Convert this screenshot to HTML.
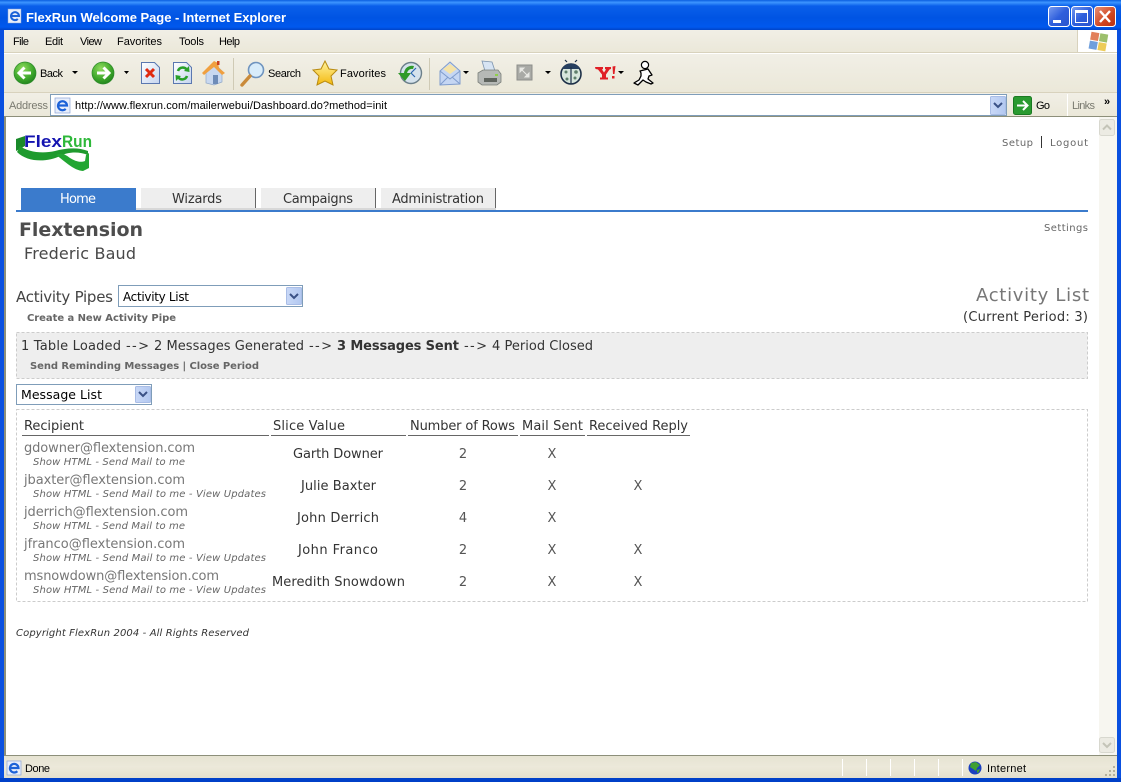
<!DOCTYPE html>
<html><head><meta charset="utf-8"><title>FlexRun Welcome Page - Internet Explorer</title>
<style>
html,body{margin:0;padding:0;background:#fff;width:1121px;height:782px;overflow:hidden}
svg{display:block}
text{white-space:pre}
.ui{font-family:"Liberation Sans",sans-serif;font-size:11px;fill:#000}
.v{font-family:"DejaVu Sans",sans-serif;font-size:13px;fill:#333}
.e{font-family:"DejaVu Sans",sans-serif;font-size:13px;fill:#777}
.s{font-family:"DejaVu Sans",sans-serif;font-size:10px;font-style:italic;fill:#666}
.h{font-family:"DejaVu Sans",sans-serif;font-size:13px;fill:#333}
.b{font-family:"DejaVu Sans",sans-serif;font-size:10px;font-weight:bold;fill:#666}
.x{font-family:"DejaVu Sans",sans-serif;font-size:13px;fill:#555;text-anchor:middle}
</style></head><body>
<svg xmlns="http://www.w3.org/2000/svg" width="1121" height="782" viewBox="0 0 1121 782">
<defs>
<linearGradient id="tb" x1="0" y1="0" x2="0" y2="1"><stop offset="0" stop-color="#0a5fe0"/><stop offset=".08" stop-color="#3d95ff"/><stop offset=".2" stop-color="#0a5fea"/><stop offset=".6" stop-color="#0054e3"/><stop offset=".9" stop-color="#0058ee"/><stop offset="1" stop-color="#0043c8"/></linearGradient>
<linearGradient id="bar" x1="0" y1="0" x2="0" y2="1"><stop offset="0" stop-color="#f1efe6"/><stop offset="1" stop-color="#ebe8d9"/></linearGradient>
<linearGradient id="st" x1="0" y1="0" x2="0" y2="1"><stop offset="0" stop-color="#e6e3d2"/><stop offset=".5" stop-color="#ece9da"/><stop offset="1" stop-color="#e3dfcd"/></linearGradient>
<radialGradient id="gr" cx=".4" cy=".3" r=".8"><stop offset="0" stop-color="#8fdc5e"/><stop offset=".6" stop-color="#3da62a"/><stop offset="1" stop-color="#1a7a1a"/></radialGradient>
<linearGradient id="btn" x1="0" y1="0" x2="1" y2="1"><stop offset="0" stop-color="#7a9df0"/><stop offset=".5" stop-color="#2f5fdc"/><stop offset="1" stop-color="#2a55cc"/></linearGradient>
<linearGradient id="cl" x1="0" y1="0" x2="1" y2="1"><stop offset="0" stop-color="#e8937a"/><stop offset=".6" stop-color="#d0451f"/><stop offset="1" stop-color="#b8300f"/></linearGradient>
<linearGradient id="sb" x1="0" y1="0" x2="1" y2="0"><stop offset="0" stop-color="#c9d8f7"/><stop offset="1" stop-color="#b2c8f0"/></linearGradient>
<linearGradient id="doc" x1="0" y1="0" x2="1" y2="1"><stop offset="0" stop-color="#fff"/><stop offset="1" stop-color="#c4d4ef"/></linearGradient>
<linearGradient id="star" x1="0" y1="0" x2="0" y2="1"><stop offset="0" stop-color="#fff3a0"/><stop offset="1" stop-color="#f4b90e"/></linearGradient>
</defs>

<!-- window frame -->
<rect width="1121" height="782" fill="#0a50e0"/>
<rect x="0" y="0" width="1121" height="30" fill="url(#tb)"/>
<rect x="0" y="778" width="1121" height="4" fill="#0040c8"/>
<rect x="4" y="30" width="1113" height="748" fill="#ece9d8"/>

<!-- title bar -->
<rect x="8" y="9" width="13" height="14" fill="#e8eefb" stroke="#8aa4d8" stroke-width=".5"/>
<path d="M11 16h8a4 4 0 1 0-1.200 3" fill="none" stroke="#1c62d8" stroke-width="2"/>
<text x="26" y="22" font-family="Liberation Sans,sans-serif" font-size="13" font-weight="bold" fill="#fff" textLength="260">FlexRun Welcome Page - Internet Explorer</text>
<rect x="1048.500" y="6.500" width="21" height="20" rx="3" fill="url(#btn)" stroke="#fff"/>
<rect x="1053" y="20" width="8" height="3" fill="#fff"/>
<rect x="1071.500" y="6.500" width="21" height="20" rx="3" fill="url(#btn)" stroke="#fff"/>
<rect x="1075.500" y="10.500" width="12" height="12" fill="none" stroke="#fff"/><rect x="1075" y="10" width="13" height="3" fill="#fff"/>
<rect x="1094.500" y="6.500" width="21" height="20" rx="3" fill="url(#cl)" stroke="#fff"/>
<path d="M1100 11l10 11M1110 11l-10 11" stroke="#fff" stroke-width="2.400"/>

<!-- menu bar -->
<rect x="4" y="30" width="1113" height="22" fill="url(#bar)"/>
<rect x="4" y="52" width="1113" height="1" fill="#d8d2bd"/>
<rect x="4" y="53" width="1113" height="1" fill="#fff"/>
<text class="ui" x="13" y="45" textLength="16">File</text>
<text class="ui" x="45" y="45" textLength="18">Edit</text>
<text class="ui" x="80" y="45" textLength="22">View</text>
<text class="ui" x="117" y="45" textLength="45">Favorites</text>
<text class="ui" x="179" y="45" textLength="25">Tools</text>
<text class="ui" x="219" y="45" textLength="21">Help</text>
<rect x="1077" y="30" width="40" height="22" fill="#fff"/><rect x="1077" y="30" width="1" height="22" fill="#d8d2bd"/>
<g transform="rotate(10 1098 41)"><rect x="1090" y="33" width="8" height="8" fill="#e2805a"/><rect x="1099" y="33" width="8" height="8" fill="#9cbf6c"/><rect x="1090" y="42" width="8" height="8" fill="#6f9fdc"/><rect x="1099" y="42" width="8" height="8" fill="#edcc5a"/></g>

<!-- toolbar -->
<rect x="4" y="54" width="1113" height="38" fill="url(#bar)"/>
<rect x="4" y="92" width="1113" height="1" fill="#d8d2bd"/>
<rect x="233" y="58" width="1" height="32" fill="#cfcab5"/>
<rect x="429" y="58" width="1" height="32" fill="#cfcab5"/>
<!-- back -->
<circle cx="25" cy="73" r="11" fill="url(#gr)" stroke="#2d8a2a" stroke-width=".7"/>
<path d="M31 73H19M24.500 67.500L19 73l5.500 5.500" fill="none" stroke="#fff" stroke-width="3"/>
<text class="ui" x="40" y="77" textLength="23">Back</text>
<polygon points="72,71 78,71 75,74" fill="#000"/>
<!-- forward -->
<circle cx="103" cy="73" r="11" fill="url(#gr)" stroke="#2d8a2a" stroke-width=".7"/>
<path d="M97 73h12M103.500 67.500L109 73l-5.500 5.500" fill="none" stroke="#fff" stroke-width="3"/>
<polygon points="124,71 129,71 126.500,74" fill="#000"/>
<!-- stop -->
<path d="M141.500 62.500h13l5 5v16h-18z" fill="url(#doc)" stroke="#5b78b0"/>
<path d="M146 69l8 8M154 69l-8 8" stroke="#e02a10" stroke-width="3"/>
<!-- refresh -->
<path d="M173.500 62.500h13l5 5v16h-18z" fill="url(#doc)" stroke="#5b78b0"/>
<path d="M178 71a5 5 0 0 1 9-1" fill="none" stroke="#2aa02a" stroke-width="2.600"/><polygon points="189,66 189.500,72 184,71" fill="#2aa02a"/>
<path d="M187 76a5 5 0 0 1-9 1" fill="none" stroke="#2aa02a" stroke-width="2.600"/><polygon points="176,81 175.500,75 181,76" fill="#2aa02a"/>
<!-- home -->
<path d="M206 72v11l8 2 8-3V71l-8-8z" fill="#c8d8f0" stroke="#90a8c8" stroke-width=".7"/>
<path d="M202 73l12-12 4 2 1 5 6 5-3 2-8-8-10 8z" fill="#f0a040"/>
<rect x="217" y="61" width="2.500" height="4" fill="#c84020"/>
<rect x="213" y="75" width="5" height="9" fill="#6e8cb8"/>
<!-- search -->
<circle cx="256" cy="70" r="7.500" fill="#d8ecfa" stroke="#6f94bf" stroke-width="1.600"/>
<path d="M250 76l-8 9" stroke="#c98a3a" stroke-width="3.400" stroke-linecap="round"/>
<text class="ui" x="268" y="77" textLength="33">Search</text>
<!-- favorites -->
<polygon points="325,61 329,69 337,70 331,76 333,85 325,81 317,85 319,76 313,70 321,69" fill="url(#star)" stroke="#b88a10"/>
<text class="ui" x="340" y="77" textLength="46">Favorites</text>
<!-- history -->
<circle cx="411" cy="73" r="10.500" fill="#d5e2ec" stroke="#6b7f8a" stroke-width="1.400"/>
<path d="M411 73l5-5M411 73l4 4" stroke="#2b66b0" stroke-width="1.200"/>
<path d="M398 73h6a8 8 0 0 1 10-7l-1 3a5 5 0 0 0-6 4h4l-6 8z" fill="#2f9a2a"/>
<!-- mail -->
<path d="M440 71l10-9 10 9v13l-20 1z" fill="#c5d6f3" stroke="#7f9ccd"/>
<path d="M443 69l7-5 7 5-7 5z" fill="#f5e3a8"/>
<path d="M440 71l10 8 10-8M440 85l8-8M460 84l-8-7" fill="none" stroke="#7f9ccd"/>
<polygon points="463,71 469,71 466,74" fill="#000"/>
<!-- print -->
<path d="M482 61l10 1 3 9h-10z" fill="#d7e4f3" stroke="#7d94ae" stroke-width=".8"/>
<path d="M478 73l5-3h15l3 4v8l-4 3h-15l-4-3z" fill="#b6b9b6" stroke="#7a7f7a" stroke-width=".8"/>
<rect x="484" y="78" width="13" height="4" fill="#5f645e"/>
<rect x="495" y="74" width="3" height="2" fill="#8fd04a"/>
<!-- edit disabled -->
<rect x="517" y="65" width="15" height="15" fill="#a9aaa6" stroke="#8d8e8b"/>
<path d="M520 68h4l-4 4zM529 77h-4l4-4zM522 70l5 5" fill="#e8e8e4" stroke="#e8e8e4"/>
<polygon points="545,71 551,71 548,74" fill="#000"/>
<!-- ladybug -->
<circle cx="571" cy="74" r="10" fill="#d7e6dc" stroke="#1d3048" stroke-width="1.600"/>
<path d="M562 69a10 10 0 0 1 18 0z" fill="#263f60"/>
<path d="M571 67v17" stroke="#1d3048" stroke-width="1.200"/>
<path d="M567 62l-2-2M575 62l2-2" stroke="#1d3048" stroke-width="1.200"/>
<circle cx="566" cy="72" r="1.500" fill="#5f7f6c"/><circle cx="576" cy="72" r="1.800" fill="#5f7f6c"/><circle cx="567" cy="79" r="1.500" fill="#5f7f6c"/><circle cx="575" cy="78" r="1.500" fill="#5f7f6c"/>
<!-- yahoo -->
<path d="M595 67h8v2l-1 .5 2 3 2-3-1-.5v-2h6v2l-1.500.5-3.500 5v3h2v2h-8v-2h2v-3l-4-5-2.500-.5z" fill="#e01f26"/>
<path d="M612.500 66.500l3-.5-1 8h-1.500zM612 76h2.500v2.500H612z" fill="#e01f26"/>
<polygon points="618,71 624,71 621,74" fill="#000"/>
<!-- aim -->
<circle cx="645" cy="65" r="3.600" fill="#fff" stroke="#000" stroke-width="1.200"/>
<path d="M640 71l8-2 2 3 2 3-3 1-1 3 5 4-2 1-5-2-3-2-5 5-4-2 5-3 2-4 0-3z" fill="#fff" stroke="#000" stroke-width="1.300" stroke-linejoin="round"/>

<!-- address bar -->
<rect x="4" y="93" width="1113" height="23" fill="url(#bar)"/>
<text class="ui" x="9" y="109" textLength="39" style="fill:#7a7a70">Address</text>
<rect x="50.500" y="94.500" width="956" height="21" fill="#fff" stroke="#7f9db9"/>
<rect x="55" y="98" width="15" height="15" fill="#e8eefb" stroke="#8aa4d8" stroke-width=".7"/>
<path d="M58 105.500h9a4.500 4.500 0 1 0-1.300 3.400" fill="none" stroke="#1c62d8" stroke-width="2.200"/>
<text class="ui" x="75" y="109" textLength="312">http://www.flexrun.com/mailerwebui/Dashboard.do?method=init</text>
<rect x="990.500" y="96.500" width="15" height="18" rx="1" fill="url(#sb)" stroke="#a9bde6"/>
<path d="M994 103l4 4 4-4" fill="none" stroke="#3a5186" stroke-width="2"/>
<rect x="1013.500" y="96.500" width="18" height="18" rx="2" fill="#2a9a30" stroke="#1a7a22"/>
<path d="M1017 105.500h10M1023 101l4.500 4.500-4.500 4.500" fill="none" stroke="#fff" stroke-width="2"/>
<text class="ui" x="1036" y="109" textLength="14">Go</text>
<rect x="1067" y="94" width="1" height="22" fill="#fff"/>
<text class="ui" x="1072" y="109" textLength="23" style="fill:#7a7a70">Links</text>
<text x="1104" y="105" font-family="Liberation Sans,sans-serif" font-weight="bold" font-size="11" fill="#000">»</text>

<!-- content -->
<rect x="4" y="116" width="1113" height="1" fill="#8d8f7a"/>
<rect x="4" y="117" width="2" height="638" fill="#8d8f7a"/>
<rect x="6" y="117" width="1093" height="638" fill="#fff"/>
<rect x="1099" y="117" width="18" height="638" fill="#f7f6f0"/>
<rect x="1099.500" y="119.500" width="15" height="16" rx="2" fill="#ecebe3" stroke="#d8d8cf"/>
<path d="M1103 129.500l4-4 4 4" fill="none" stroke="#c4c4b8" stroke-width="2"/>
<rect x="1099.500" y="737.500" width="15" height="15" rx="2" fill="#ecebe3" stroke="#d8d8cf"/>
<path d="M1103 743l4 4 4-4" fill="none" stroke="#c4c4b8" stroke-width="2"/>

<!-- logo -->
<path d="M16 139l9-3v10l-9 5z" fill="#1a8a2a"/>
<path d="M20 146C28 152 42 154 55 151 66 148 78 147 88 151L88 155C78 151 68 152 60 156 48 162 28 163 17 152z" fill="#1f9a2e"/>
<path d="M56 155C62 152 66 155 70 158 75 161 80 163 85 161L86 155 89 153 89 168 83 171C73 170 66 162 56 155z" fill="#22a632"/>
<text x="24" y="147" font-family="Liberation Sans,sans-serif" font-size="17" font-weight="bold" fill="#1414b0" textLength="38" lengthAdjust="spacingAndGlyphs">Flex</text>
<text x="62" y="147" font-family="Liberation Sans,sans-serif" font-size="17" font-weight="bold" fill="#2eb83a" textLength="30" lengthAdjust="spacingAndGlyphs">Run</text>

<!-- top right links -->
<text class="h" style="font-size:10px;fill:#666" x="1002" y="146" textLength="31">Setup</text>
<rect x="1041" y="136" width="1" height="12" fill="#333"/>
<text class="h" style="font-size:10px;fill:#666" x="1050" y="146" textLength="38">Logout</text>
<text class="h" style="font-size:10px;fill:#666" x="1044" y="231" textLength="44">Settings</text>

<!-- tabs -->
<rect x="21" y="188" width="115" height="23" fill="#3b7bcc"/>
<text class="h" style="fill:#fff" x="60" y="203" textLength="36">Home</text>
<rect x="141" y="188" width="114" height="21" fill="#eee"/><rect x="255" y="188" width="1" height="21" fill="#666"/>
<rect x="261" y="188" width="114" height="21" fill="#eee"/><rect x="375" y="188" width="1" height="21" fill="#666"/>
<rect x="381" y="188" width="114" height="21" fill="#eee"/><rect x="495" y="188" width="1" height="21" fill="#666"/>
<rect x="136" y="208" width="360" height="2" fill="#d8d8d8"/>
<text class="h" x="172" y="203" textLength="50">Wizards</text>
<text class="h" x="283" y="203" textLength="70">Campaigns</text>
<text class="h" x="392" y="203" textLength="92">Administration</text>
<rect x="16" y="210" width="1072" height="2" fill="#3b7bcc"/>

<!-- headings -->
<text x="19" y="236" font-family="DejaVu Sans,sans-serif" font-size="19" font-weight="bold" fill="#4d4d4d" textLength="124">Flextension</text>
<text x="24" y="259" font-family="DejaVu Sans,sans-serif" font-size="16" fill="#484848" textLength="112">Frederic Baud</text>
<text x="16" y="302" font-family="DejaVu Sans,sans-serif" font-size="15" fill="#444" textLength="97">Activity Pipes</text>

<rect x="118.500" y="285.500" width="184" height="21" fill="#fff" stroke="#7f9db9"/>
<text x="123" y="301" font-family="DejaVu Sans,sans-serif" font-size="12" fill="#000" textLength="66">Activity List</text>
<rect x="286.500" y="287.500" width="15" height="17" rx="1" fill="url(#sb)" stroke="#a9bde6"/>
<path d="M290 294l4 4 4-4" fill="none" stroke="#3a5186" stroke-width="2"/>
<text class="b" x="27" y="321" textLength="149">Create a New Activity Pipe</text>

<text x="976" y="301" font-family="DejaVu Sans,sans-serif" font-size="18" fill="#777" textLength="113">Activity List</text>
<text class="h" x="963" y="321" textLength="125">(Current Period: 3)</text>

<!-- status box -->
<rect x="16.500" y="332.500" width="1071" height="46" fill="#eee" stroke="#ccc" stroke-dasharray="3 2"/>
<text class="h" x="21" y="350" textLength="100">1 Table Loaded</text>
<text class="h" x="126" y="350" textLength="23">--&gt;</text>
<text class="h" x="154" y="350" textLength="150">2 Messages Generated</text>
<text class="h" x="309" y="350" textLength="23">--&gt;</text>
<text class="h" style="font-weight:bold" x="337" y="350" textLength="122">3 Messages Sent</text>
<text class="h" x="464" y="350" textLength="23">--&gt;</text>
<text class="h" x="492" y="350" textLength="101">4 Period Closed</text>
<text class="b" x="30" y="369" textLength="229">Send Reminding Messages | Close Period</text>

<!-- select 2 -->
<rect x="16.500" y="384.500" width="135" height="20" fill="#fff" stroke="#7f9db9"/>
<text x="21" y="399" font-family="DejaVu Sans,sans-serif" font-size="12.500" fill="#000" textLength="81">Message List</text>
<rect x="135.500" y="386.500" width="15" height="16" rx="1" fill="url(#sb)" stroke="#a9bde6"/>
<path d="M139 392l4 4 4-4" fill="none" stroke="#3a5186" stroke-width="2"/>

<!-- table -->
<rect x="16.500" y="409.500" width="1071" height="192" fill="#fff" stroke="#ccc" stroke-dasharray="3 2"/>
<text class="h" x="24" y="430" textLength="60">Recipient</text>
<text class="h" x="273" y="430" textLength="72">Slice Value</text>
<text class="h" x="410" y="430" textLength="105">Number of Rows</text>
<text class="h" x="522" y="430" textLength="61">Mail Sent</text>
<text class="h" x="589" y="430" textLength="99">Received Reply</text>
<g fill="#666">
<rect x="22" y="435" width="247" height="1"/><rect x="271" y="435" width="135" height="1"/><rect x="408" y="435" width="110" height="1"/><rect x="520" y="435" width="65" height="1"/><rect x="587" y="435" width="103" height="1"/>
</g>

<text class="e" x="24" y="452" textLength="171">gdowner@flextension.com</text>
<text class="s" x="33" y="465" textLength="152">Show HTML - Send Mail to me</text>
<text class="v" x="293" y="458" textLength="90">Garth Downer</text>
<text class="x" x="463" y="458">2</text><text class="x" x="552" y="458">X</text>

<text class="e" x="24" y="484" textLength="161">jbaxter@flextension.com</text>
<text class="s" x="33" y="497" textLength="233">Show HTML - Send Mail to me - View Updates</text>
<text class="v" x="301" y="490" textLength="75">Julie Baxter</text>
<text class="x" x="463" y="490">2</text><text class="x" x="552" y="490">X</text><text class="x" x="638" y="490">X</text>

<text class="e" x="24" y="516" textLength="164">jderrich@flextension.com</text>
<text class="s" x="33" y="529" textLength="152">Show HTML - Send Mail to me</text>
<text class="v" x="297" y="522" textLength="82">John Derrich</text>
<text class="x" x="463" y="522">4</text><text class="x" x="552" y="522">X</text>

<text class="e" x="24" y="548" textLength="161">jfranco@flextension.com</text>
<text class="s" x="33" y="561" textLength="233">Show HTML - Send Mail to me - View Updates</text>
<text class="v" x="298" y="554" textLength="80">John Franco</text>
<text class="x" x="463" y="554">2</text><text class="x" x="552" y="554">X</text><text class="x" x="638" y="554">X</text>

<text class="e" x="24" y="580" textLength="195">msnowdown@flextension.com</text>
<text class="s" x="33" y="593" textLength="233">Show HTML - Send Mail to me - View Updates</text>
<text class="v" x="272" y="586" textLength="133">Meredith Snowdown</text>
<text class="x" x="463" y="586">2</text><text class="x" x="552" y="586">X</text><text class="x" x="638" y="586">X</text>

<text x="16" y="636" font-family="DejaVu Sans,sans-serif" font-size="10" font-style="italic" fill="#333" textLength="233">Copyright FlexRun 2004 - All Rights Reserved</text>

<!-- status bar -->
<rect x="4" y="755" width="1113" height="1" fill="#8d8f7a"/>
<rect x="4" y="756" width="1113" height="22" fill="url(#st)"/>
<rect x="7" y="761" width="14" height="14" fill="#e8eefb" stroke="#8aa4d8" stroke-width=".7"/>
<path d="M10 768h8.500a4.300 4.300 0 1 0-1.200 3.200" fill="none" stroke="#1c62d8" stroke-width="2.200"/>
<text class="ui" x="25" y="772" textLength="25">Done</text>
<g fill="#fff"><rect x="842" y="759" width="1" height="17"/><rect x="866" y="759" width="1" height="17"/><rect x="890" y="759" width="1" height="17"/><rect x="914" y="759" width="1" height="17"/><rect x="938" y="759" width="1" height="17"/><rect x="962" y="759" width="1" height="17"/></g>
<circle cx="975" cy="768" r="6.500" fill="#1a3fc0"/>
<path d="M971 763l5-1 4 3-3 3-1 3-3-2-3-2zM977 770l3-1-1 3-2 1z" fill="#3fa030"/>
<text class="ui" x="987" y="772" textLength="39">Internet</text>
<g fill="#b4b09c"><rect x="1113" y="766" width="2" height="2"/><rect x="1109" y="770" width="2" height="2"/><rect x="1113" y="770" width="2" height="2"/><rect x="1105" y="774" width="2" height="2"/><rect x="1109" y="774" width="2" height="2"/><rect x="1113" y="774" width="2" height="2"/></g>
</svg>
</body></html>
